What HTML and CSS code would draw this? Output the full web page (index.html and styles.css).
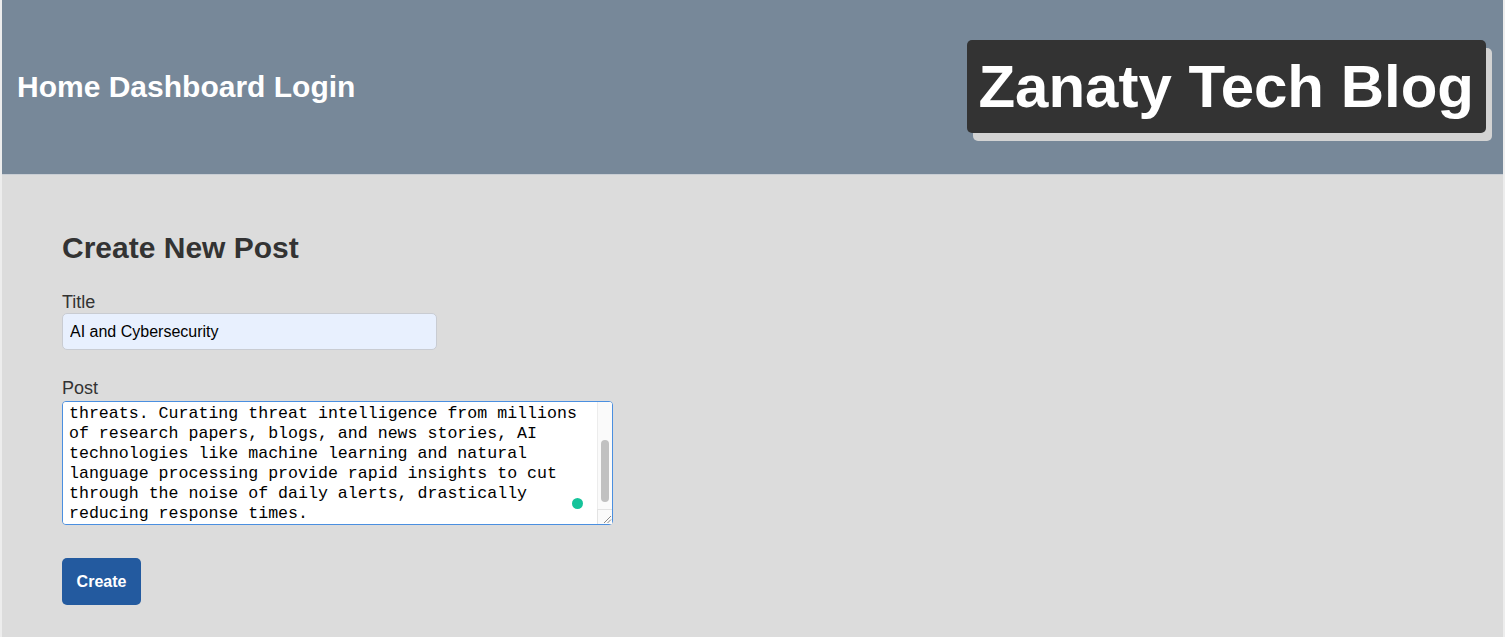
FILE: index.html
```html
<!DOCTYPE html>
<html lang="en">
<head>
<meta charset="utf-8">
<title>Zanaty Tech Blog</title>
<link rel="stylesheet" href="styles.css">
</head>
<body>
<header class="site-header">
  <nav class="nav">
    <a class="nav-link" href="#">Home</a>
    <a class="nav-link" href="#">Dashboard</a>
    <a class="nav-link" href="#">Login</a>
  </nav>
  <div class="logo">Zanaty Tech Blog</div>
</header>
<main class="main">
  <form class="post-form">
    <h2 class="form-title">Create New Post</h2>
    <label class="field-label" for="title">Title</label>
    <input class="title-input" id="title" type="text" value="AI and Cybersecurity">
    <label class="field-label post-label" for="post">Post</label>
    <div class="textarea-wrap">
      <textarea class="post-input" id="post">Artificial intelligence is rapidly becoming one of the most important tools in modern cybersecurity. As attackers grow more sophisticated, security teams are overwhelmed by alerts and struggle to keep pace with emerging
threats. Curating threat intelligence from millions of research papers, blogs, and news stories, AI technologies like machine learning and natural language processing provide rapid insights to cut through the noise of daily alerts, drastically reducing response times.</textarea>
      <span class="assist-dot"></span>
      <div class="fake-scrollbar">
        <div class="fake-thumb"></div>
        <div class="fake-corner">
          <svg class="grip" width="14" height="14" viewBox="0 0 14 14"><path d="M6 13 L13 6 M9.5 13 L13 9.5" stroke="#8a8a8a" stroke-width="1" fill="none"/></svg>
        </div>
      </div>
    </div>
    <button class="create-btn" type="button">Create</button>
  </form>
</main>
<script src="script.js"></script>
</body>
</html>
```

FILE: styles.css
```css
html {
  background: #ededed;
}
body {
  margin: 0 2px;
  min-height: 100vh;
  background: #dcdcdc;
  font-family: "Liberation Sans", Arial, Helvetica, sans-serif;
  color: #333;
}
.site-header {
  height: 175px;
  box-sizing: border-box;
  padding: 0 17px 0 15px;
  background: #778899;
  display: flex;
  align-items: center;
  justify-content: space-between;
  border-bottom: 1px solid #c9ced4;
}
.nav {
  font-size: 30px;
  font-weight: bold;
}
.nav-link {
  color: #fff;
  text-decoration: none;
}
.logo {
  background: #333;
  color: #fff;
  font-size: 60px;
  font-weight: bold;
  line-height: 69px;
  padding: 12px 12px 12px 11px;
  margin-bottom: 1px;
  border-radius: 5px;
  box-shadow: 6px 8px 0 #d3d3d3;
}
.main {
  padding: 56px 60px 0;
}
.post-form {
  display: flex;
  flex-direction: column;
  align-items: flex-start;
}
.form-title {
  margin: 0 0 27px;
  font-size: 30px;
  font-weight: bold;
  color: #333;
}
.field-label {
  font-size: 18px;
  color: #333;
  margin-bottom: 0;
}
.post-label {
  margin-bottom: 2px;
}
.title-input {
  box-sizing: border-box;
  width: 375px;
  height: 37px;
  margin: 0 0 28px;
  padding: 0 7px;
  border: 1px solid #c9ccd2;
  border-radius: 5px;
  background: #e8f0fe;
  font-family: "Liberation Sans", Arial, sans-serif;
  font-size: 16px;
  color: #000;
  outline: none;
}
.textarea-wrap {
  position: relative;
  margin-bottom: 33px;
}
.post-input {
  display: block;
  box-sizing: border-box;
  width: 551px;
  height: 124px;
  margin: 0;
  padding: 3px 21px 0 6px;
  border: 1px solid #4a8fe0;
  border-radius: 4px;
  background: #fff;
  font-family: "Liberation Mono", "Courier New", monospace;
  font-size: 16.6px;
  line-height: 20px;
  color: #000;
  outline: none;
  resize: none;
}
.assist-dot {
  position: absolute;
  left: 510px;
  top: 97px;
  width: 11px;
  height: 11px;
  border-radius: 50%;
  background: #15c39a;
}
.fake-scrollbar {
  position: absolute;
  top: 1px;
  right: 1px;
  bottom: 1px;
  width: 14px;
  background: #fafafa;
  border-left: 1px solid #ececec;
  border-top-right-radius: 3px;
  border-bottom-right-radius: 3px;
}
.fake-thumb {
  position: absolute;
  top: 38px;
  left: 3px;
  width: 8px;
  height: 62px;
  border-radius: 4px;
  background: #c1c1c1;
}
.fake-corner {
  position: absolute;
  left: -1px;
  right: 0;
  bottom: 0;
  height: 14px;
  background: #fafafa;
  border-top: 1px solid #e3e3e3;
  border-left: 1px solid #e3e3e3;
}
.grip {
  display: block;
  margin-left: auto;
}
.create-btn {
  box-sizing: border-box;
  width: 79px;
  height: 47px;
  padding: 0;
  border: none;
  border-radius: 5px;
  background: #235a9f;
  color: #fff;
  font-family: "Liberation Sans", Arial, sans-serif;
  font-size: 16px;
  font-weight: bold;
}
```

FILE: script.js
```js
var ta = document.getElementById('post');
var pos = ta.value.indexOf('blogs,') + 6;
ta.focus();
ta.setSelectionRange(pos, pos);
ta.scrollTop = ta.scrollHeight;
```
